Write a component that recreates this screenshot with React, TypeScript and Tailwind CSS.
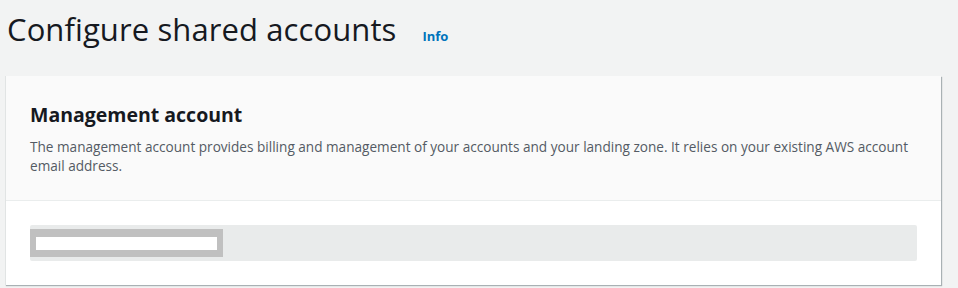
export default function App() {
  return (
    <div className="h-[288px] w-full overflow-hidden bg-[#f2f3f3] font-['Open_Sans',sans-serif] text-[#16191f]">
      {/* Page header */}
      <div className="flex items-baseline gap-[26px] pl-[7px] pt-[9px]">
        <h1 className="text-[31px] leading-[40px] font-normal tracking-[0.1px]">Configure shared accounts</h1>
        <a className="text-[13px] font-bold text-[#0073bb]">Info</a>
      </div>

      {/* Container */}
      <div className="ml-[5px] mr-[17px] mt-[27px] border-l border-[#e1e4e4] bg-white shadow-[1px_1px_1px_0_rgba(0,28,36,0.3)]">
        <div className="h-[125px] border-b border-[#eaeded] bg-[#fafafa] px-[24px] pt-[27px]">
          <h2 className="text-[19.5px] leading-[24px] font-bold">Management account</h2>
          <p className="mt-[11px] text-[13.6px] leading-[18.5px] text-[#545b64]">
            The management account provides billing and management of your accounts and your landing zone. It relies on your existing AWS account
            <br />
            email address.
          </p>
        </div>
        <div className="px-[24px] pt-[24px] pb-[24px]">
          <div className="flex h-[36px] items-center rounded-[2px] bg-[#e9ebeb]">
            <div className="flex h-[28px] w-[193px] items-center bg-[#c0c0c0] px-[6px]">
              <div className="h-[13px] w-full bg-white" />
            </div>
          </div>
        </div>
      </div>
    </div>
  )
}
